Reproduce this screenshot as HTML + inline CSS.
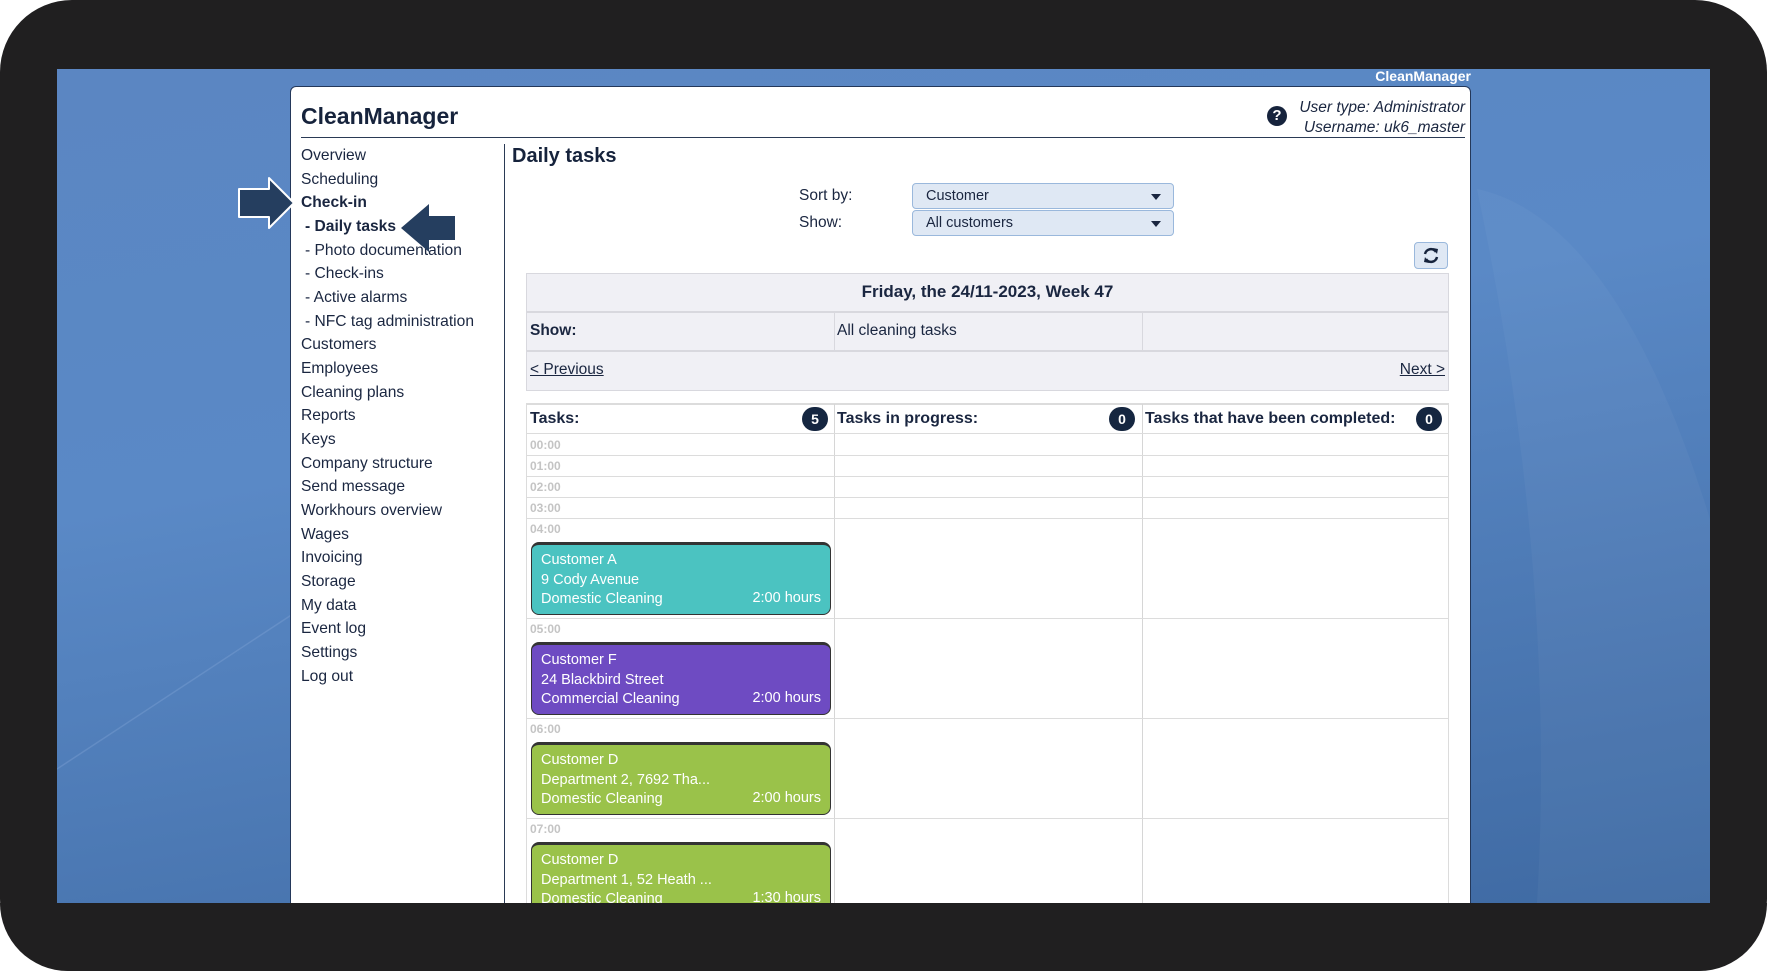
<!DOCTYPE html>
<html><head><meta charset="utf-8"><style>
*{margin:0;padding:0;box-sizing:border-box}
body{width:1767px;height:971px;background:#fff;position:relative;overflow:hidden;font-family:"Liberation Sans",sans-serif;color:#1a2640}
.frame{position:absolute;left:0;top:0;width:1767px;height:971px;background:#201f20;border-radius:72px}
.blue{position:absolute;left:57px;top:69px;width:1653px;height:834px;background:linear-gradient(170deg,#5b86c2 0%,#5a89c6 40%,#3f6aa3 100%);overflow:hidden}
.abs{position:absolute}
.panel{position:absolute;left:290px;top:86px;width:1181px;height:817px;background:#fff;border-radius:6px 6px 0 0;border:1px solid #24385a;border-bottom:none}
.side div{position:absolute;left:301px;font-size:15.6px;white-space:nowrap;color:#1a2640}
.tbl{position:absolute;background:#f0f0f5;border:1px solid #d8d8de}
.hr{position:absolute;left:526px;width:923px;border-top:1px solid #dcdcdc}
.vl{position:absolute;border-left:1px solid #d6d6d6}
.time{position:absolute;left:530px;font-size:12px;color:#c4c4c4;font-weight:bold}
.card{position:absolute;left:531px;width:300px;border-radius:8px;border:1.5px solid #333;border-top:3px solid #333;color:#fff;font-size:14.5px;padding:6px 0 0 9px;line-height:19.5px}
.card .h{position:absolute;right:9px;bottom:6px}
.badge{position:absolute;width:26px;height:24px;border-radius:12px;background:#152640;color:#fff;font-weight:bold;font-size:14px;text-align:center;line-height:24px}
.sel{position:absolute;left:912px;width:262px;height:26px;border:1px solid #9ab8dc;border-radius:4px;background:#dfe8f4;font-size:14.5px;padding:4px 0 0 13px}
.sel:after{content:"";position:absolute;right:12px;top:10px;border:5px solid transparent;border-top:6px solid #1a2640;border-bottom:none}
</style></head><body>
<div class="frame"></div>
<div class="blue">
<svg class="abs" style="left:0;top:0" width="1653" height="834"><path d="M0 700 L700 240" stroke="#7fa3d4" stroke-width="1.5" opacity=".4" fill="none"/><path d="M1420 120 Q1560 150 1653 450 L1653 834 L1480 834 Q1500 500 1420 120Z" fill="#ffffff" opacity=".035"/></svg>
</div>
<div class="abs" style="left:1350px;top:68px;width:121px;font-size:14px;font-weight:bold;color:#fff;text-align:right">CleanManager</div>
<div class="panel"></div>
<div class="abs" style="left:301px;top:103px;font-size:23px;font-weight:bold;color:#16233c">CleanManager</div>
<div class="abs" style="left:301px;top:137px;width:1164px;border-top:1.5px solid #2a3a55"></div>
<div class="abs" style="left:1267px;top:106px;width:20px;height:20px;border-radius:50%;background:#16233c;color:#fff;font-size:15px;font-weight:bold;text-align:center;line-height:20px">?</div>
<div class="abs" style="right:302px;top:98px;font-size:15.5px;font-style:italic;text-align:right;line-height:20px">User type: Administrator<br>Username: uk6_master</div>
<div class="abs" style="left:504px;top:144px;height:760px;border-left:1.5px solid #2a3a55"></div>
<div class="side">
<div style="top:147px">Overview</div><div style="top:171px">Scheduling</div>
<div style="top:194px;font-weight:bold">Check-in</div>
<div style="top:218px;left:305px;font-weight:bold">- Daily tasks</div>
<div style="top:242px;left:305px">- Photo documentation</div>
<div style="top:265px;left:305px">- Check-ins</div>
<div style="top:289px;left:305px">- Active alarms</div>
<div style="top:313px;left:305px">- NFC tag administration</div>
<div style="top:336px">Customers</div><div style="top:360px">Employees</div><div style="top:384px">Cleaning plans</div>
<div style="top:407px">Reports</div><div style="top:431px">Keys</div><div style="top:455px">Company structure</div>
<div style="top:478px">Send message</div><div style="top:502px">Workhours overview</div><div style="top:526px">Wages</div>
<div style="top:549px">Invoicing</div><div style="top:573px">Storage</div><div style="top:597px">My data</div>
<div style="top:620px">Event log</div><div style="top:644px">Settings</div><div style="top:668px">Log out</div>
</div>
<svg class="abs" style="left:236px;top:175px" width="62" height="56"><path d="M3 14 H33 V3 L58 28 L33 53 V42 H3 Z" fill="#253e5f" stroke="#fff" stroke-width="2" stroke-linejoin="round"/></svg>
<svg class="abs" style="left:398px;top:202px" width="60" height="52"><path d="M57 14 H31 V2 L3 26 L31 50 V38 H57 Z" fill="#253e5f"/></svg>
<div class="abs" style="left:512px;top:145px;font-size:20px;font-weight:bold;color:#16233c">Daily tasks</div>
<div class="abs" style="left:799px;top:187px;font-size:15.5px">Sort by:</div>
<div class="abs" style="left:799px;top:214px;font-size:15.5px">Show:</div>
<div class="sel" style="top:183px">Customer</div>
<div class="sel" style="top:210px">All customers</div>
<div class="abs" style="left:1414px;top:242px;width:34px;height:27px;border:1px solid #9ab8dc;border-radius:4px;background:#dfe8f4"><svg width="32" height="25"><path d="M10 11 A6 6 0 0 1 21 9 M22 14 A6 6 0 0 1 11 16" stroke="#16233c" stroke-width="2.5" fill="none"/><path d="M18 5 L23 6 L22 11Z M14 20 L9 19 L10 14Z" fill="#16233c"/></svg></div>
<div class="tbl" style="left:526px;top:273px;width:923px;height:118px"></div>
<div class="hr" style="top:311px;border-color:#d8d8de;border-width:2px"></div>
<div class="hr" style="top:350px;border-color:#d8d8de;border-width:2px"></div>
<div class="vl" style="left:834px;top:312px;height:38px;border-color:#d8d8de"></div>
<div class="vl" style="left:1142px;top:312px;height:38px;border-color:#d8d8de"></div>
<div class="abs" style="left:526px;top:282px;width:923px;text-align:center;font-size:17px;font-weight:bold">Friday, the 24/11-2023, Week 47</div>
<div class="abs" style="left:530px;top:322px;font-size:15.5px;font-weight:bold">Show:</div>
<div class="abs" style="left:837px;top:322px;font-size:15.5px">All cleaning tasks</div>
<div class="abs" style="left:530px;top:361px;font-size:15.5px;text-decoration:underline">&lt; Previous</div>
<div class="abs" style="right:322px;top:361px;font-size:15.5px;text-decoration:underline">Next &gt;</div>
<div class="abs" style="left:526px;top:403px;width:923px;height:500px;border:1px solid #dcdcdc;border-bottom:none;border-top:2px solid #dcdcdc"></div>
<div class="vl" style="left:834px;top:404px;height:499px"></div>
<div class="vl" style="left:1142px;top:404px;height:499px"></div>
<div class="hr" style="top:433px"></div><div class="hr" style="top:455px"></div><div class="hr" style="top:476px"></div><div class="hr" style="top:497px"></div><div class="hr" style="top:518px"></div><div class="hr" style="top:618px"></div><div class="hr" style="top:718px"></div><div class="hr" style="top:818px"></div>
<div class="abs" style="left:530px;top:410px;font-size:16px;font-weight:bold">Tasks:</div>
<div class="abs" style="left:837px;top:410px;font-size:16px;font-weight:bold">Tasks in progress:</div>
<div class="abs" style="left:1145px;top:410px;font-size:16px;font-weight:bold">Tasks that have been completed:</div>
<div class="badge" style="left:802px;top:407px">5</div>
<div class="badge" style="left:1109px;top:407px">0</div>
<div class="badge" style="left:1416px;top:407px">0</div>
<div class="time" style="top:438px">00:00</div><div class="time" style="top:459px">01:00</div><div class="time" style="top:480px">02:00</div><div class="time" style="top:501px">03:00</div><div class="time" style="top:522px">04:00</div><div class="time" style="top:622px">05:00</div><div class="time" style="top:722px">06:00</div><div class="time" style="top:822px">07:00</div>
<div class="card" style="top:542px;height:73px;background:#4bc3c1">Customer A<br>9 Cody Avenue<br>Domestic Cleaning<span class="h">2:00 hours</span></div>
<div class="card" style="top:642px;height:73px;background:#6e4bc2">Customer F<br>24 Blackbird Street<br>Commercial Cleaning<span class="h">2:00 hours</span></div>
<div class="card" style="top:742px;height:73px;background:#9ac24a">Customer D<br>Department 2, 7692 Tha...<br>Domestic Cleaning<span class="h">2:00 hours</span></div>
<div class="card" style="top:842px;height:73px;background:#9ac24a">Customer D<br>Department 1, 52 Heath ...<br>Domestic Cleaning<span class="h">1:30 hours</span></div>
<div class="abs" style="left:0;top:903px;width:1767px;height:68px;background:#201f20;border-radius:0 0 72px 72px"></div>
</body></html>
